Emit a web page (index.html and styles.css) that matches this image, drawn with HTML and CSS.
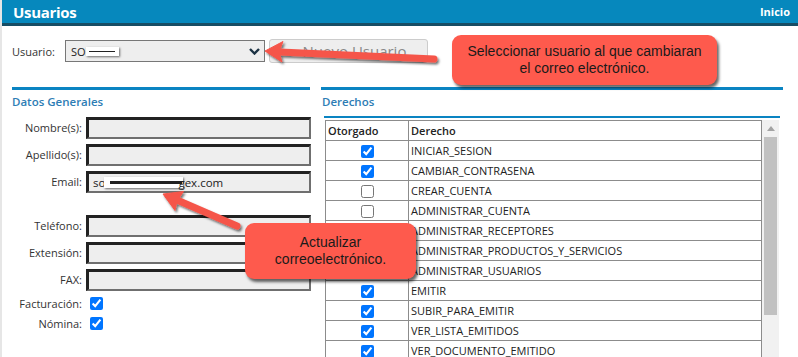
FILE: index.html
```html
<!DOCTYPE html>
<html lang="es">
<head>
    <meta charset="UTF-8">
    <meta name="viewport" content="width=device-width, initial-scale=1.0">
    <title>Usuarios</title>
    <link rel="stylesheet" href="styles.css">
</head>
<body>

<div class="page">
    <div class="topbar">
        <h1>Usuarios</h1>
        <a class="home" href="#">Inicio</a>
    </div>

    <div class="toolbar">
        <label class="toolbar-label">Usuario:</label>
        <div class="select">
            <span class="select-text">SOL<span class="redact redact-user"></span></span>
            <svg class="chevron" width="11" height="7" viewBox="0 0 11 7">
                <path d="M1 1 L5.5 5.5 L10 1" fill="none" stroke="#1c3344" stroke-width="2.4"/>
            </svg>
        </div>
        <button class="btn-new">Nuevo Usuario</button>
    </div>

    <div class="sections">
        <div class="panel panel-general">
            <h2>Datos Generales</h2>
            <div class="form">
                <label>Nombre(s):</label>
                <div class="field"></div>
                <label>Apellido(s):</label>
                <div class="field"></div>
                <label>Email:</label>
                <div class="field">so<span class="redact redact-mail"></span>gex.com</div>
                <div class="spacer"></div>
                <label>Teléfono:</label>
                <div class="field"></div>
                <label>Extensión:</label>
                <div class="field"></div>
                <label>FAX:</label>
                <div class="field"></div>
                <label class="check-label">Facturación:</label>
                <div class="check-cell"><input type="checkbox" checked></div>
                <label class="check-label">Nómina:</label>
                <div class="check-cell"><input type="checkbox" checked></div>
            </div>
        </div>

        <div class="panel panel-rights">
            <h2>Derechos</h2>
            <div class="rights-box">
                <table class="rights">
                    <tr><th class="col-check">Otorgado</th><th>Derecho</th></tr>
                    <tr><td class="col-check"><input type="checkbox" checked></td><td>INICIAR_SESION</td></tr>
                    <tr><td class="col-check"><input type="checkbox" checked></td><td>CAMBIAR_CONTRASENA</td></tr>
                    <tr><td class="col-check"><input type="checkbox"></td><td>CREAR_CUENTA</td></tr>
                    <tr><td class="col-check"><input type="checkbox"></td><td>ADMINISTRAR_CUENTA</td></tr>
                    <tr><td class="col-check"><input type="checkbox" checked></td><td>ADMINISTRAR_RECEPTORES</td></tr>
                    <tr><td class="col-check"><input type="checkbox" checked></td><td>ADMINISTRAR_PRODUCTOS_Y_SERVICIOS</td></tr>
                    <tr><td class="col-check"><input type="checkbox" checked></td><td>ADMINISTRAR_USUARIOS</td></tr>
                    <tr><td class="col-check"><input type="checkbox" checked></td><td>EMITIR</td></tr>
                    <tr><td class="col-check"><input type="checkbox" checked></td><td>SUBIR_PARA_EMITIR</td></tr>
                    <tr><td class="col-check"><input type="checkbox" checked></td><td>VER_LISTA_EMITIDOS</td></tr>
                    <tr><td class="col-check"><input type="checkbox" checked></td><td>VER_DOCUMENTO_EMITIDO</td></tr>
                </table>
                <div class="scrollbar">
                    <div class="scroll-up">
                        <svg width="8" height="5" viewBox="0 0 8 5"><path d="M0 5 L4 0 L8 5 Z" fill="#a3a3a3"/></svg>
                    </div>
                    <div class="scroll-thumb"></div>
                </div>
            </div>
        </div>
    </div>

    <!-- notas de ayuda sobre la captura -->
    <div class="callout callout-user">Seleccionar usuario al que cambiaran<br>el correo electrónico.</div>
    <div class="callout callout-mail">Actualizar<br>correoelectrónico.</div>

    <svg class="arrows" width="798" height="357" viewBox="0 0 798 357">
        <defs>
            <filter id="shadow" x="-20%" y="-50%" width="140%" height="200%">
                <feDropShadow dx="1.5" dy="2" stdDeviation="1.3" flood-color="#000" flood-opacity="0.55"/>
            </filter>
        </defs>
        <g filter="url(#shadow)" fill="#f5554a" stroke="#f5554a">
            <line x1="280" y1="52" x2="434" y2="59" stroke-width="7" stroke-linecap="round"/>
            <polygon points="265,51 283,41.5 279,52 282,62" stroke-width="1" stroke-linejoin="round"/>
            <line x1="177" y1="200" x2="237" y2="226" stroke-width="7" stroke-linecap="round"/>
            <polygon points="163,194 183.5,191.5 177,201 175,210.5" stroke-width="1" stroke-linejoin="round"/>
        </g>
    </svg>
</div>

</body>
</html>
```

FILE: styles.css
```css
body {
    margin: 0;
    font-family: 'Open Sans', sans-serif;
    color: #333;
    background-color: #fff;
    overflow: hidden;
}

.page {
    position: relative;
    width: 798px;
    height: 357px;
    border-left: 2px solid #e6e6e6;
    box-sizing: border-box;
    overflow: hidden;
}

.topbar {
    display: flex;
    justify-content: space-between;
    align-items: center;
    height: 23px;
    padding: 0 8px 0 11px;
    background-color: #0688bd;
    border-bottom: 3px solid #174d64;
}

.topbar h1 {
    margin: 0;
    font-size: 15px;
    font-weight: 700;
    color: #fff;
    letter-spacing: -0.3px;
}

.home {
    font-size: 11px;
    font-weight: 700;
    color: #fff;
    text-decoration: none;
}

.toolbar {
    display: flex;
    align-items: center;
    margin: 13px 0 0 10px;
    height: 24px;
}

.toolbar-label {
    width: 53px;
    font-size: 11px;
}

.select {
    display: flex;
    align-items: center;
    justify-content: space-between;
    box-sizing: border-box;
    width: 200px;
    height: 22px;
    padding: 0 4px 0 5px;
    background-color: #eee;
    border: 1px solid #777;
    font-size: 11px;
    color: #222;
}

.select-text {
    display: flex;
    align-items: center;
}

.redact {
    display: inline-block;
    background-color: #fff;
    box-shadow: 1px 1px 2px rgba(0, 0, 0, 0.55);
    background-image: linear-gradient(#fff 40%, #222 40%, #222 60%, #fff 60%);
    background-repeat: no-repeat;
}

.redact-user {
    width: 33px;
    height: 9px;
    margin-left: -5px;
    background-size: 26px 100%;
    background-position: 3px 0;
}

.redact-mail {
    width: 79px;
    height: 11px;
    margin: 0 -5px 0 -1px;
    background-size: 72px 100%;
    background-position: 6px 0;
}

.chevron {
    margin-top: 1px;
}

.btn-new {
    box-sizing: border-box;
    width: 159px;
    height: 24px;
    margin-left: 4px;
    padding: 0 0 0 12px;
    background-color: #eee;
    border: 1px solid #ccc;
    border-radius: 3px;
    font-family: 'Open Sans', sans-serif;
    font-size: 15px;
    color: #888;
    line-height: 20px;
}

.sections {
    display: flex;
    gap: 11px;
    margin: 24px 0 0 10px;
}

.panel {
    border-top: 3px solid #0a84c2;
}

.panel h2 {
    margin: 0;
    height: 26px;
    line-height: 24px;
    font-size: 11.5px;
    font-weight: 600;
    color: #2d7db5;
}

.panel-general {
    width: 298px;
}

.panel-rights {
    width: 462px;
}

.panel-rights h2 {
    padding-left: 1px;
}

.form {
    display: grid;
    grid-template-columns: 70px 225px;
    column-gap: 4px;
    row-gap: 5px;
    margin-top: 1px;
}

.form label {
    font-size: 11px;
    text-align: right;
    line-height: 22px;
}

.field {
    box-sizing: border-box;
    height: 22px;
    padding: 0 4px;
    background-color: #eee;
    border-style: solid;
    border-width: 3px 2px 2px 3px;
    border-color: #222 #6f6f6f #6f6f6f #222;
    font-size: 11.5px;
    line-height: 17px;
    color: #222;
    display: flex;
    align-items: center;
}

.spacer {
    grid-column: span 2;
    height: 12px;
}

.form .check-label {
    line-height: 15px;
}

.check-cell {
    height: 15px;
    display: flex;
    align-items: center;
    padding-left: 4px;
}

input[type="checkbox"] {
    margin: 0;
    width: 13px;
    height: 13px;
}

.rights-box {
    display: flex;
    margin: 0 3px;
    padding-top: 2px;
    border-top: 2px solid #0a84c2;
}

.rights {
    width: 437px;
    margin-left: 1px;
    border-collapse: collapse;
    font-size: 11px;
    color: #222;
}

.rights tr {
    height: 20px;
}

.rights th,
.rights td {
    border: 1px solid #8c8c8c;
    padding: 0 2px;
    text-align: left;
    white-space: nowrap;
}

.rights th {
    font-weight: 600;
}

.rights .col-check {
    width: 78px;
}

.rights td.col-check {
    text-align: center;
    padding: 0;
}

.rights td.col-check input {
    vertical-align: middle;
    margin-top: -2px;
}

.scrollbar {
    width: 17px;
    height: 240px;
    background-color: #f1f1f1;
}

.scroll-up {
    height: 16px;
    display: flex;
    align-items: center;
    justify-content: center;
}

.scroll-thumb {
    height: 178px;
    margin: 1px 2px 0 2px;
    background-color: #c1c1c1;
}

.callout {
    position: absolute;
    box-sizing: border-box;
    display: flex;
    align-items: center;
    justify-content: center;
    text-align: center;
    background-color: #fe5a4d;
    border-radius: 9px;
    box-shadow: 2px 3px 3px rgba(0, 0, 0, 0.6);
    font-family: 'Liberation Sans', Arial, sans-serif;
    font-size: 14px;
    line-height: 17px;
    color: #1a1a1a;
}

.callout-user {
    left: 450px;
    top: 35px;
    width: 265px;
    height: 50px;
}

.callout-mail {
    left: 243px;
    top: 223px;
    width: 171px;
    height: 56px;
}

.arrows {
    position: absolute;
    left: -2px;
    top: 0;
    pointer-events: none;
}
```
